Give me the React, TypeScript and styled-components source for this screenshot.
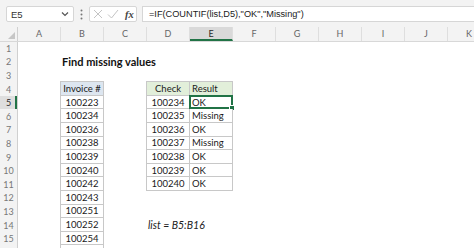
import React from "react";
import styled, { createGlobalStyle } from "styled-components";

const GlobalStyle = createGlobalStyle`
  html, body { margin: 0; padding: 0; background: #fff; overflow: hidden; }
  body { font-family: "Lato", "Liberation Sans", sans-serif; }
`;

const COLS = ["A", "B", "C", "D", "E", "F", "G", "H", "I", "J", "K"];
/* row 16 lies just past the bottom edge: only its top sliver is visible */
const ROWS = Array.from({ length: 16 }, (_, i) => i + 1);
const VISIBLE_ROWS = 15;
const INVOICES = [
  "Invoice #", "100223", "100234", "100236", "100238", "100239", "100240",
  "100242", "100243", "100251", "100252", "100254", "",
];
const CHECKS: [string, string][] = [
  ["Check", "Result"],
  ["100234", "OK"],
  ["100235", "Missing"],
  ["100236", "OK"],
  ["100237", "Missing"],
  ["100238", "OK"],
  ["100239", "OK"],
  ["100240", "OK"],
];

const Window = styled.div`
  width: 474px;
  height: 248px;
  overflow: hidden;
  display: flex;
  flex-direction: column;
  background: #fff;
`;

const FormulaBar = styled.div`
  height: 27px;
  flex: none;
  box-sizing: border-box;
  padding: 6px 0 5px 6px;
  display: flex;
  align-items: stretch;
  background: #f3f3f3;
  font-family: "Liberation Sans", sans-serif;
`;

const NameBox = styled.div`
  width: 68px;
  box-sizing: border-box;
  border: 1px solid #d6d6d6;
  border-radius: 2px;
  background: #fff;
  display: flex;
  align-items: center;
  justify-content: space-between;
  padding: 0 4px 0 4px;
  font-size: 9.5px;
  color: #333;
`;

const Dots = styled.div`
  width: 15px;
  display: flex;
  align-items: center;
  justify-content: center;
`;

const FxBox = styled.div`
  width: 48px;
  box-sizing: border-box;
  border: 1px solid #d6d6d6;
  border-radius: 2px;
  background: #fff;
  display: flex;
  align-items: center;
  padding-left: 3px;
  gap: 4px;
`;

const FxLabel = styled.span`
  font-family: "Liberation Serif", serif;
  font-style: italic;
  font-weight: bold;
  font-size: 10.5px;
  color: #444;
  margin-left: 2px;
`;

const FormulaInput = styled.div`
  flex: 1;
  margin-left: 5px;
  margin-right: -3px;
  box-sizing: border-box;
  border: 1px solid #d6d6d6;
  background: #fff;
  display: flex;
  align-items: center;
  padding-left: 6px;
  font-size: 9.2px;
  color: #222;
  white-space: nowrap;
`;

const HeaderRow = styled.div`
  display: flex;
  flex: none;
  height: 14.5px;
  background: #f3f3f3;
  border-bottom: 1px solid #d8d8d8;
  box-sizing: border-box;
`;

const Corner = styled.div`
  width: 18px;
  flex: none;
  box-sizing: border-box;
  border-right: 1px solid #d0d0d0;
  display: flex;
  align-items: flex-end;
  justify-content: flex-end;
  padding: 0 2px 2px 0;
`;

const ColHeader = styled.div<{ $active?: boolean }>`
  width: 43px;
  flex: none;
  box-sizing: border-box;
  display: flex;
  align-items: center;
  justify-content: center;
  font-size: 9px;
  color: ${(p) => (p.$active ? "#2b2b2b" : "#666")};
  background: ${(p) => (p.$active ? "#d9d9d9" : "transparent")};
  border-right: 1px solid #dedede;
  border-bottom: ${(p) => (p.$active ? "2px solid #217346" : "none")};
  padding-top: ${(p) => (p.$active ? "2px" : "0")};
`;

const Body = styled.div`
  display: flex;
  flex: 1;
  min-height: 0;
`;

const RowHeaders = styled.div`
  width: 18px;
  flex: none;
  display: flex;
  flex-direction: column;
  background: #f3f3f3;
  border-right: 1px solid #d0d0d0;
  box-sizing: border-box;
`;

const RowHeader = styled.div<{ $active?: boolean }>`
  height: 13.6px;
  flex: none;
  display: flex;
  align-items: center;
  justify-content: center;
  font-size: 9px;
  color: ${(p) => (p.$active ? "#2b2b2b" : "#777")};
  background: ${(p) => (p.$active ? "#dedede" : "transparent")};
  box-shadow: ${(p) => (p.$active ? "inset -2px 0 0 #217346" : "none")};
`;

const Canvas = styled.div`
  display: grid;
  grid-template-columns: repeat(11, 43px);
  grid-template-rows: repeat(16, 13.6px);
  flex: none;
`;

const Title = styled.div`
  grid-column: 2;
  grid-row: 2;
  display: flex;
  align-items: center;
  padding-left: 1px;
  font-weight: bold;
  font-size: 11px;
  color: #111;
  white-space: nowrap;
`;

const Note = styled.div`
  grid-column: 4 / span 2;
  grid-row: 14;
  display: flex;
  align-items: center;
  padding-left: 1px;
  font-style: italic;
  font-size: 10.5px;
  color: #222;
  white-space: nowrap;
`;

const Table = styled.div<{ $cols: number; $col: string; $rows: number }>`
  grid-column: ${(p) => p.$col};
  grid-row: 4 / span ${(p) => p.$rows};
  align-self: start;
  justify-self: start;
  display: grid;
  grid-template-columns: repeat(${(p) => p.$cols}, 43px);
  grid-auto-rows: 13.6px;
  border-top: 1px solid #c8c8c8;
  border-left: 1px solid #c8c8c8;
  margin: -1px 0 0 -1px;
`;

const Cell = styled.div<{
  $fill?: string;
  $align?: "center" | "left";
  $selected?: boolean;
}>`
  position: relative;
  box-sizing: border-box;
  border-right: 1px solid #c8c8c8;
  border-bottom: 1px solid #c8c8c8;
  background: ${(p) => p.$fill || "#fff"};
  display: flex;
  align-items: center;
  justify-content: ${(p) => (p.$align === "left" ? "flex-start" : "center")};
  padding-left: ${(p) => (p.$align === "left" ? "2px" : "0")};
  font-size: 9.5px;
  color: #1a1a1a;
  white-space: nowrap;

  ${(p) =>
    p.$selected &&
    `
    &::before {
      content: "";
      position: absolute;
      left: -1px; top: -1px; right: -1px; bottom: -1px;
      border: 2px solid #217346;
    }
    &::after {
      content: "";
      position: absolute;
      right: -3px; bottom: -3px;
      width: 4px; height: 4px;
      background: #217346;
      border: 1px solid #fff;
    }
  `}
`;

export default function App() {
  return (
    <Window>
      <GlobalStyle />
      <FormulaBar>
        <NameBox>
          <span>E5</span>
          <svg width="8" height="6" viewBox="0 0 8 6">
            <path d="M1 1.5 L4 4.5 L7 1.5" fill="none" stroke="#555" strokeWidth="1.2" />
          </svg>
        </NameBox>
        <Dots>
          <svg width="3" height="11" viewBox="0 0 3 11">
            <circle cx="1.5" cy="1.5" r="1" fill="#777" />
            <circle cx="1.5" cy="5.5" r="1" fill="#777" />
            <circle cx="1.5" cy="9.5" r="1" fill="#777" />
          </svg>
        </Dots>
        <FxBox>
          <svg width="10" height="10" viewBox="0 0 10 10">
            <path d="M1 1 L9 9 M9 1 L1 9" stroke="#c4c4c4" strokeWidth="1" fill="none" />
          </svg>
          <svg width="12" height="10" viewBox="0 0 12 10">
            <path d="M1 5.5 L4.5 9 L11 1" stroke="#c4c4c4" strokeWidth="1" fill="none" />
          </svg>
          <FxLabel>fx</FxLabel>
        </FxBox>
        <FormulaInput>=IF(COUNTIF(list,D5),"OK","Missing")</FormulaInput>
      </FormulaBar>
      <HeaderRow>
        <Corner>
          <svg width="7" height="7" viewBox="0 0 7 7">
            <path d="M7 0 L7 7 L0 7 Z" fill="#c6c6c6" />
          </svg>
        </Corner>
        {COLS.map((c) => (
          <ColHeader key={c} $active={c === "E"}>
            {c}
          </ColHeader>
        ))}
      </HeaderRow>
      <Body>
        <RowHeaders>
          {ROWS.map((r) => (
            <RowHeader key={r} $active={r === 5}>
              {r <= VISIBLE_ROWS ? r : ""}
            </RowHeader>
          ))}
        </RowHeaders>
        <Canvas>
          <Title>Find missing values</Title>
          <Table $cols={1} $col="2" $rows={13}>
            {INVOICES.map((v, i) => (
              <Cell key={i} $fill={i === 0 ? "#dde6f0" : undefined}>
                {v}
              </Cell>
            ))}
          </Table>
          <Table $cols={2} $col="4 / span 2" $rows={8}>
            {CHECKS.map(([a, b], i) => (
              <React.Fragment key={i}>
                <Cell $fill={i === 0 ? "#e2efda" : undefined}>{a}</Cell>
                <Cell
                  $fill={i === 0 ? "#e2efda" : undefined}
                  $align="left"
                  $selected={i === 1}
                >
                  {b}
                </Cell>
              </React.Fragment>
            ))}
          </Table>
          <Note>list = B5:B16</Note>
        </Canvas>
      </Body>
    </Window>
  );
}
